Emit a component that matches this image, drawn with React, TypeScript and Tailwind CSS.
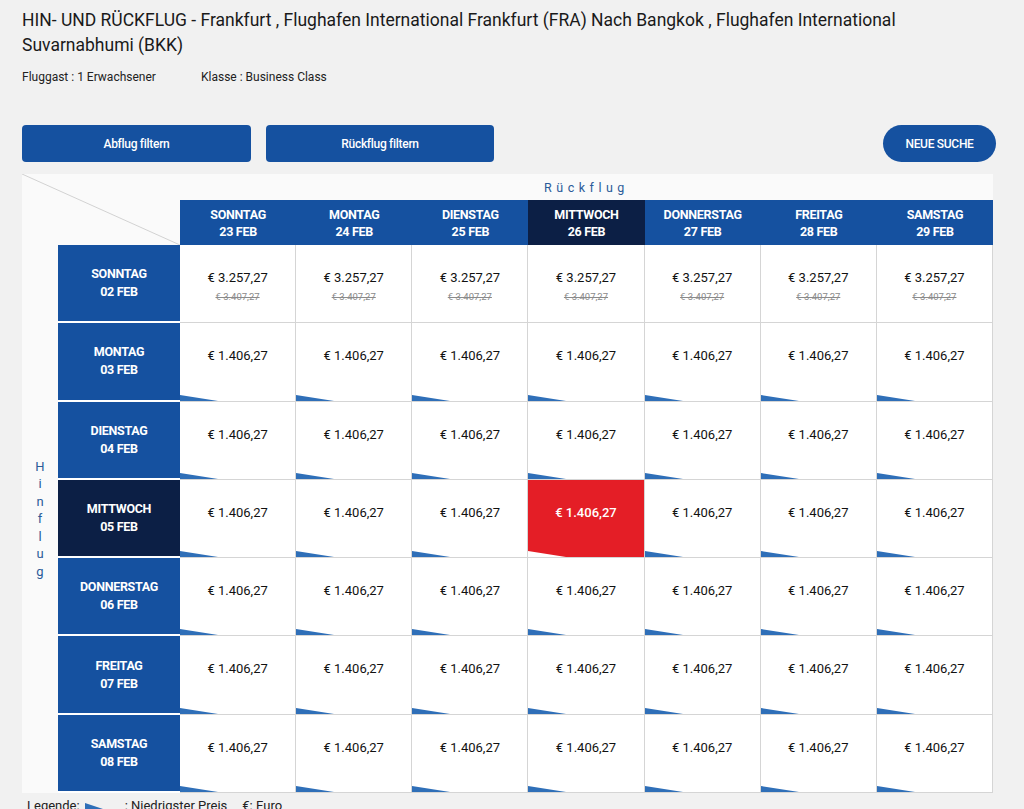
import React from 'react';

// Fare calendar: outbound days as rows, return days as columns
const returnDays = [
  ['SONNTAG', '23 FEB'],
  ['MONTAG', '24 FEB'],
  ['DIENSTAG', '25 FEB'],
  ['MITTWOCH', '26 FEB'],
  ['DONNERSTAG', '27 FEB'],
  ['FREITAG', '28 FEB'],
  ['SAMSTAG', '29 FEB'],
];

const departDays = [
  ['SONNTAG', '02 FEB'],
  ['MONTAG', '03 FEB'],
  ['DIENSTAG', '04 FEB'],
  ['MITTWOCH', '05 FEB'],
  ['DONNERSTAG', '06 FEB'],
  ['FREITAG', '07 FEB'],
  ['SAMSTAG', '08 FEB'],
];

const SELECTED_COL = 3;
const SELECTED_ROW = 3;

function Wedge({ color = '#2f6fb8', width = 38 }: { color?: string; width?: number }) {
  return (
    <svg width={width} height="6" viewBox={`0 0 ${width} 6`} className="block">
      <polygon points={`0,0 ${width},6 0,6`} fill={color} />
    </svg>
  );
}

function PriceCell({ row, col }: { row: number; col: number }) {
  const selected = row === SELECTED_ROW && col === SELECTED_COL;
  const expensive = row === 0;

  return (
    <div
      className={
        'relative flex flex-col items-center border-r border-b border-[#d5d5d5] pt-[24px] ' +
        (selected ? 'bg-[#e41e26]' : 'bg-white')
      }
    >
      <span
        className={
          'text-[13px] leading-[18px] ' +
          (selected ? 'font-medium text-white' : 'text-[#111]')
        }
      >
        {expensive ? '€ 3.257,27' : '€ 1.406,27'}
      </span>
      {expensive && (
        <span className="mt-[4px] text-[9.5px] leading-[12px] text-[#8a8a8a] line-through">
          € 3.407,27
        </span>
      )}
      {/* cheapest-price marker */}
      {!expensive && (
        <div className="absolute bottom-0 left-0">
          <Wedge color={selected ? '#ffffff' : '#2f6fb8'} />
        </div>
      )}
    </div>
  );
}

export default function App() {
  return (
    <div className="min-h-[809px] w-full overflow-hidden bg-[#f1f1f1] font-['Roboto',sans-serif] text-[#1a1a1a]">
      <div className="px-[22px] pt-[8px]">
        <h1 className="text-[17.5px] leading-[25px] font-normal">
          HIN- UND RÜCKFLUG - Frankfurt , Flughafen International Frankfurt (FRA) Nach Bangkok ,
          Flughafen International Suvarnabhumi (BKK)
        </h1>
        <div className="mt-[11px] flex text-[12px] leading-[16px] text-[#222]">
          <span className="w-[179px]">Fluggast : 1 Erwachsener</span>
          <span>Klasse : Business Class</span>
        </div>
      </div>

      {/* Action buttons */}
      <div className="mt-[40px] flex items-center pl-[22px] pr-[28px]">
        <button className="h-[37px] w-[229px] rounded-[4px] bg-[#1551a0] text-[12px] font-medium tracking-[-0.3px] text-white">
          Abflug filtern
        </button>
        <button className="ml-[15px] h-[37px] w-[228px] rounded-[4px] bg-[#1551a0] text-[12px] font-medium tracking-[-0.3px] text-white">
          Rückflug filtern
        </button>
        <button className="ml-auto h-[37px] w-[113px] rounded-full bg-[#1551a0] text-[12px] font-medium tracking-[-0.3px] text-white">
          NEUE SUCHE
        </button>
      </div>

      {/* Calendar grid */}
      <div className="ml-[22px] mt-[12px] grid w-[971px] grid-cols-[36px_122px_repeat(7,minmax(0,1fr))] grid-rows-[26px_45px_repeat(7,78.3px)] bg-[#fafafa]">
        <div className="col-span-2 row-span-2">
          <svg width="158" height="71" viewBox="0 0 158 71" className="block">
            <line x1="0" y1="0" x2="158" y2="71" stroke="#d2d2d2" strokeWidth="1" />
          </svg>
        </div>
        <div className="col-span-7 flex items-center justify-center pt-[2px] text-[12.5px] tracking-[4.5px] text-[#2b5b99]">
          Rückflug
        </div>

        {returnDays.map(([day, date], i) => (
          <div
            key={day}
            className={
              'flex flex-col items-center justify-center text-[12.5px] font-bold leading-[17px] tracking-[-0.3px] text-white ' +
              (i === SELECTED_COL ? 'bg-[#0c1f45]' : 'bg-[#1551a0]')
            }
          >
            <span>{day}</span>
            <span>{date}</span>
          </div>
        ))}

        <div className="row-span-7 flex flex-col items-center justify-center text-[13px] leading-[17.5px] text-[#2b5b99]">
          {'Hinflug'.split('').map((ch, i) => (
            <span key={i}>{ch}</span>
          ))}
        </div>

        {departDays.map(([day, date], r) => (
          <React.Fragment key={day}>
            <div
              className={
                'flex flex-col items-center justify-center border-b-2 border-white text-[12.5px] font-bold leading-[18px] tracking-[-0.3px] text-white ' +
                (r === SELECTED_ROW ? 'bg-[#0c1f45]' : 'bg-[#1551a0]')
              }
            >
              <span>{day}</span>
              <span>{date}</span>
            </div>
            {returnDays.map((_, c) => (
              <PriceCell key={c} row={r} col={c} />
            ))}
          </React.Fragment>
        ))}
      </div>

      {/* Legend */}
      <div className="mt-[5px] flex items-center pl-[27px] text-[13px] leading-[16px] text-[#222]">
        <span>Legende:</span>
        <span className="ml-[5px] w-[40px]">
          <Wedge width={18} />
        </span>
        <span>: Niedrigster Preis</span>
        <span className="ml-[15px]">€: Euro</span>
      </div>
    </div>
  );
}
